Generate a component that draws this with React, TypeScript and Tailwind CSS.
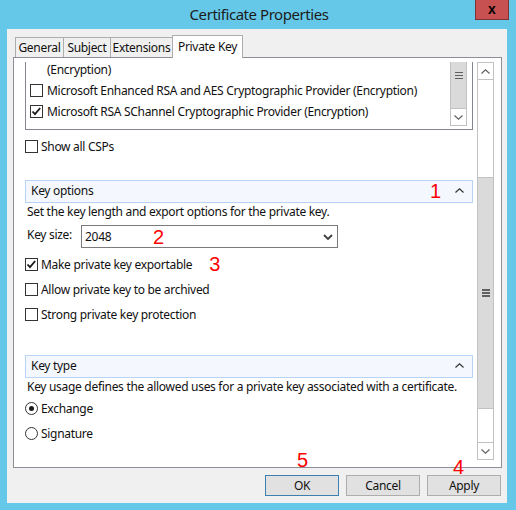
import { ReactNode } from "react"

function CheckBox({ checked }: { checked?: boolean }) {
    return (
        <div className="w-[13px] h-[13px] shrink-0 border border-[#333333] bg-white flex items-center justify-center">
            {checked && (
                <svg width="11" height="11" viewBox="0 0 11 11">
                    <path d="M1.5 5.5 L4 8.2 L9.2 2" fill="none" stroke="#1a1a1a" strokeWidth="1.8" />
                </svg>
            )}
        </div>
    )
}

function Radio({ checked }: { checked?: boolean }) {
    return (
        <div className="w-[13px] h-[13px] shrink-0 rounded-full border border-[#333333] bg-white flex items-center justify-center">
            {checked && <div className="w-[5px] h-[5px] rounded-full bg-[#1a1a1a]"></div>}
        </div>
    )
}

function Row({ children, h = "h-[25px]" }: { children: ReactNode; h?: string }) {
    return <div className={`${h} flex items-center gap-[3px] whitespace-nowrap`}>{children}</div>
}

function ChevUp({ color = "#333333" }: { color?: string }) {
    return (
        <svg width="9" height="5" viewBox="0 0 9 5">
            <path d="M0.5 4.5 L4.5 0.8 L8.5 4.5" fill="none" stroke={color} strokeWidth="1.2" />
        </svg>
    )
}

function ChevDown({ color = "#606060" }: { color?: string }) {
    return (
        <svg width="9" height="5" viewBox="0 0 9 5">
            <path d="M0.5 0.5 L4.5 4.2 L8.5 0.5" fill="none" stroke={color} strokeWidth="1.2" />
        </svg>
    )
}

function Grip() {
    return (
        <div className="flex flex-col gap-[1.5px]">
            <div className="w-[8px] h-[1.5px] bg-[#606060]"></div>
            <div className="w-[8px] h-[1.5px] bg-[#606060]"></div>
            <div className="w-[8px] h-[1.5px] bg-[#606060]"></div>
        </div>
    )
}

function SectionHeader({ title, mark }: { title: string; mark?: string }) {
    return (
        <div className="relative h-[23px] w-[448px] border border-[#b7d4f4] bg-[#f4f8fe] flex items-center pl-[5px] pr-[8px]">
            <span className="pb-[1px]">{title}</span>
            {mark && (
                <span className="absolute left-[404px] top-0 text-[20px] leading-[20px] tracking-normal text-[#ff0000] font-['Liberation_Sans',sans-serif]">
                    {mark}
                </span>
            )}
            <span className="ml-auto pb-[2px]">
                <ChevUp />
            </span>
        </div>
    )
}

export default function App() {
    const tabs = [
        { name: "General", w: "w-[49px]" },
        { name: "Subject", w: "w-[48px]" },
        { name: "Extensions", w: "w-[63px]" },
    ]

    return (
        <div className="w-[516px] h-[510px] bg-[#65c8e9] overflow-hidden text-[12px] tracking-[-0.3px] text-[#111111] font-['Noto_Sans',sans-serif]">
            {/* Title bar */}
            <div className="relative h-[29px] flex items-center justify-center">
                <span className="text-[15px] tracking-[-0.45px] text-[#1c1c1c] pb-[1px] pl-[2px]">Certificate Properties</span>
                <div className="absolute left-[475px] top-0 w-[34px] h-[20px] bg-[#c75050] border border-[#7d3333] border-t-0 flex items-center justify-center">
                    <span className="text-[14px] font-bold leading-none tracking-normal text-black font-['Liberation_Sans',sans-serif] pb-[1px]">x</span>
                </div>
            </div>

            {/* Client area */}
            <div className="ml-[7px] w-[500px] h-[474px] bg-[#f0f0f0]">
                {/* Tabs */}
                <div className="h-[28px] pl-[8px] flex items-end">
                    {tabs.map((t) => (
                        <div
                            key={t.name}
                            className={`${t.w} h-[20px] border border-b-0 border-[#adadad] bg-[#f0f0f0] -mr-px flex items-center justify-center pt-[1px]`}
                        >
                            {t.name}
                        </div>
                    ))}
                    <div className="relative z-10 w-[71px] h-[23px] -mb-px border border-b-0 border-[#adadad] bg-white flex items-start justify-center pt-[2px]">
                        Private Key
                    </div>
                </div>

                {/* Tab panel */}
                <div className="ml-[6px] w-[489px] h-[411px] border border-[#8c8f96] bg-white flex pt-[4px] pb-[7px] pr-[7px]">
                    {/* Viewport */}
                    <div className="w-[463px] h-[398px] overflow-hidden pl-[11px]">
                        {/* CSP list box */}
                        <div className="-mt-[33px] h-[101px] w-[448px] border border-[#828790] flex pr-[5px]">
                            <div className="flex-1 flex flex-col justify-end pb-[7px] pl-[4px] whitespace-nowrap">
                                <div className="h-[21px] flex items-center pl-[17px]">(Encryption)</div>
                                <div className="h-[21px] flex items-center gap-[4px]">
                                    <CheckBox />
                                    <span>Microsoft Enhanced RSA and AES Cryptographic Provider (Encryption)</span>
                                </div>
                                <div className="h-[21px] flex items-center gap-[4px]">
                                    <CheckBox checked />
                                    <span>Microsoft RSA SChannel Cryptographic Provider (Encryption)</span>
                                </div>
                            </div>
                            <div className="w-[17px] flex flex-col pb-[3px]">
                                <div className="flex-1 bg-[#dadada] border border-[#c2c2c2] flex flex-col justify-end items-center pb-[29px]">
                                    <Grip />
                                </div>
                                <div className="h-[17px] border border-t-0 border-[#c2c2c2] bg-white flex items-center justify-center">
                                    <ChevDown />
                                </div>
                            </div>
                        </div>

                        <div className="mt-[6px] h-[21px] flex items-center gap-[3px]">
                            <CheckBox />
                            <span>Show all CSPs</span>
                        </div>

                        {/* Key options */}
                        <div className="mt-[23px]">
                            <SectionHeader title="Key options" mark="1" />
                        </div>
                        <div className="h-[17px] flex items-center pl-[2px] whitespace-nowrap">
                            Set the key length and export options for the private key.
                        </div>
                        <div className="mt-[5px] flex items-center">
                            <span className="w-[56px] pl-[2px] pb-[3px]">Key size:</span>
                            <div className="relative w-[257px] h-[23px] border border-[#7a7a7a] bg-white flex items-center pl-[3px] pr-[4px]">
                                <span className="pt-[1px]">2048</span>
                                <span className="absolute left-[71px] top-[1px] text-[20px] leading-[20px] tracking-normal text-[#ff0000] font-['Liberation_Sans',sans-serif]">2</span>
                                <span className="ml-auto">
                                    <svg width="10" height="6" viewBox="0 0 10 6">
                                        <path d="M1 1 L5 5 L9 1" fill="none" stroke="#444444" strokeWidth="1.9" />
                                    </svg>
                                </span>
                            </div>
                        </div>

                        <div className="mt-[4px]">
                            <Row>
                                <CheckBox checked />
                                <span>Make private key exportable</span>
                                <span className="ml-[14px] mt-[-2px] text-[20px] leading-[20px] tracking-normal text-[#ff0000] font-['Liberation_Sans',sans-serif]">3</span>
                            </Row>
                            <Row>
                                <CheckBox />
                                <span>Allow private key to be archived</span>
                            </Row>
                            <Row>
                                <CheckBox />
                                <span>Strong private key protection</span>
                            </Row>
                        </div>

                        {/* Key type */}
                        <div className="mt-[28px]">
                            <SectionHeader title="Key type" />
                        </div>
                        <div className="h-[17px] flex items-center pl-[2px] whitespace-nowrap">
                            Key usage defines the allowed uses for a private key associated with a certificate.
                        </div>
                        <div className="mt-[1px]">
                            <Row>
                                <Radio checked />
                                <span>Exchange</span>
                            </Row>
                            <Row>
                                <Radio />
                                <span>Signature</span>
                            </Row>
                        </div>
                    </div>

                    {/* Outer scrollbar */}
                    <div className="w-[17px] h-[398px] border border-[#c2c2c2] flex flex-col">
                        <div className="h-[17px] border-b border-[#c2c2c2] flex items-center justify-center">
                            <ChevUp color="#606060" />
                        </div>
                        <div className="h-[97px]"></div>
                        <div className="h-[232px] -mx-px bg-[#dadada] border border-[#c2c2c2] flex items-center justify-center">
                            <Grip />
                        </div>
                        <div className="flex-1"></div>
                        <div className="h-[17px] border-t border-[#c2c2c2] flex items-center justify-center">
                            <ChevDown />
                        </div>
                    </div>
                </div>

                {/* Buttons */}
                <div className="relative mt-[7px] flex justify-end gap-[7px] pr-[6px]">
                    <span className="absolute left-[290px] -top-[25px] text-[20px] leading-[20px] tracking-normal text-[#ff0000] font-['Liberation_Sans',sans-serif]">5</span>
                    <span className="absolute left-[446px] -top-[18px] text-[20px] leading-[20px] tracking-normal text-[#ff0000] font-['Liberation_Sans',sans-serif]">4</span>
                    <button className="w-[74px] h-[21px] bg-[#e1e1e1] border border-[#3c7fb1] flex items-center justify-center">OK</button>
                    <button className="w-[74px] h-[21px] bg-[#e1e1e1] border border-[#adadad] flex items-center justify-center">Cancel</button>
                    <button className="w-[74px] h-[21px] bg-[#e1e1e1] border border-[#adadad] flex items-center justify-center">Apply</button>
                </div>
            </div>
        </div>
    )
}
